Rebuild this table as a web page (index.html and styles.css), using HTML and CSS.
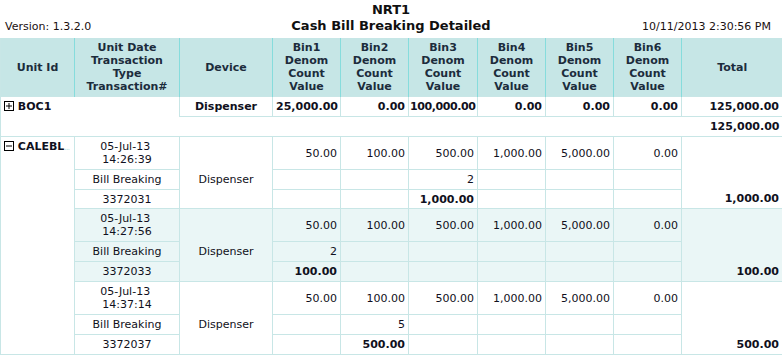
FILE: index.html
```html
<!DOCTYPE html>
<html>
<head>
<meta charset="utf-8">
<link rel="stylesheet" href="styles.css">
</head>
<body>
<div class="top">
  <div class="version">Version: 1.3.2.0</div>
  <div class="title">NRT1<br>Cash Bill Breaking Detailed</div>
  <div class="stamp">10/11/2013 2:30:56 PM</div>
</div>
<table class="grid">
  <colgroup>
    <col class="c-unit"><col class="c-date"><col class="c-dev">
    <col class="c-bin"><col class="c-bin"><col class="c-bin3"><col class="c-bin"><col class="c-bin"><col class="c-bin">
    <col class="c-total">
  </colgroup>
  <thead>
    <tr>
      <th>Unit Id</th>
      <th>Unit Date<br>Transaction<br>Type<br>Transaction#</th>
      <th>Device</th>
      <th>Bin1<br>Denom<br>Count<br>Value</th>
      <th>Bin2<br>Denom<br>Count<br>Value</th>
      <th>Bin3<br>Denom<br>Count<br>Value</th>
      <th>Bin4<br>Denom<br>Count<br>Value</th>
      <th>Bin5<br>Denom<br>Count<br>Value</th>
      <th>Bin6<br>Denom<br>Count<br>Value</th>
      <th>Total</th>
    </tr>
  </thead>
  <tbody>
    <tr class="r20">
      <td class="unit boc" colspan="2" rowspan="2"><svg class="tog" width="10" height="10" viewBox="0 0 10 10"><rect x="0.5" y="0.5" width="9" height="9" fill="#fff" stroke="#000"/><path d="M2 5h6M5 2v6" stroke="#000"/></svg> BOC1</td>
      <td class="ctr strong">Dispenser</td>
      <td class="num strong">25,000.00</td>
      <td class="num strong">0.00</td>
      <td class="num strong tight">100,000.00</td>
      <td class="num strong">0.00</td>
      <td class="num strong">0.00</td>
      <td class="num strong">0.00</td>
      <td class="num strong">125,000.00</td>
    </tr>
    <tr class="r20">
      <td class="blank" colspan="7"></td>
      <td class="blank num strong">125,000.00</td>
    </tr>

    <tr class="r33">
      <td class="unit grp" rowspan="9"><svg class="tog" width="10" height="10" viewBox="0 0 10 10"><rect x="0.5" y="0.5" width="9" height="9" fill="#fff" stroke="#000"/><path d="M2 5h6" stroke="#000"/></svg> CALEBL<span class="dots">...</span></td>
      <td class="ctr">05-Jul-13&nbsp;<br>14:26:39</td>
      <td class="ctr dev" rowspan="3">Dispenser</td>
      <td class="num">50.00</td><td class="num">100.00</td><td class="num">500.00</td><td class="num">1,000.00</td><td class="num">5,000.00</td><td class="num">0.00</td>
      <td class="num tot" rowspan="3">1,000.00</td>
    </tr>
    <tr class="r20">
      <td class="ctr">Bill Breaking</td>
      <td class="num"></td><td class="num"></td><td class="num">2</td><td class="num"></td><td class="num"></td><td class="num"></td>
    </tr>
    <tr class="r19">
      <td class="ctr">3372031</td>
      <td class="num"></td><td class="num"></td><td class="num strong">1,000.00</td><td class="num"></td><td class="num"></td><td class="num"></td>
    </tr>

    <tr class="r33 alt">
      <td class="ctr">05-Jul-13&nbsp;<br>14:27:56</td>
      <td class="ctr dev" rowspan="3">Dispenser</td>
      <td class="num">50.00</td><td class="num">100.00</td><td class="num">500.00</td><td class="num">1,000.00</td><td class="num">5,000.00</td><td class="num">0.00</td>
      <td class="num tot" rowspan="3">100.00</td>
    </tr>
    <tr class="r20 alt">
      <td class="ctr">Bill Breaking</td>
      <td class="num">2</td><td class="num"></td><td class="num"></td><td class="num"></td><td class="num"></td><td class="num"></td>
    </tr>
    <tr class="r20 alt">
      <td class="ctr">3372033</td>
      <td class="num strong">100.00</td><td class="num"></td><td class="num"></td><td class="num"></td><td class="num"></td><td class="num"></td>
    </tr>

    <tr class="r33">
      <td class="ctr">05-Jul-13&nbsp;<br>14:37:14</td>
      <td class="ctr dev" rowspan="3">Dispenser</td>
      <td class="num">50.00</td><td class="num">100.00</td><td class="num">500.00</td><td class="num">1,000.00</td><td class="num">5,000.00</td><td class="num">0.00</td>
      <td class="num tot" rowspan="3">500.00</td>
    </tr>
    <tr class="r20">
      <td class="ctr">Bill Breaking</td>
      <td class="num"></td><td class="num">5</td><td class="num"></td><td class="num"></td><td class="num"></td><td class="num"></td>
    </tr>
    <tr class="r20">
      <td class="ctr">3372037</td>
      <td class="num"></td><td class="num strong">500.00</td><td class="num"></td><td class="num"></td><td class="num"></td><td class="num"></td>
    </tr>
  </tbody>
</table>
</body>
</html>
```
FILE: styles.css
```css
html, body {
  margin: 0;
  padding: 0;
  background: #fff;
}
body {
  font-family: "DejaVu Sans", Verdana, sans-serif;
  font-size: 11px;
  color: #000;
  width: 782px;
  overflow: hidden;
}
.top {
  position: relative;
  display: flex;
  align-items: flex-end;
  justify-content: space-between;
  height: 38px;
  box-sizing: border-box;
  padding: 0 11px 5px 5px;
}
.version, .stamp {
  line-height: 13px;
  color: #1a1010;
}
.title {
  position: absolute;
  left: 0;
  right: 0;
  top: 2px;
  text-align: center;
  font-weight: bold;
  font-size: 13px;
  line-height: 16px;
  color: #101010;
}
.grid {
  width: 782px;
  table-layout: fixed;
  border-collapse: collapse;
  border-left: 1px solid #c8e6e6;
}
.c-unit { width: 74px; }
.c-date { width: 105px; }
.c-dev { width: 93px; }
.c-bin { width: 68px; }
.c-bin3 { width: 69px; }
.c-total { width: 101px; }

th {
  background: #c6e6e6;
  color: #1c2c3c;
  font-weight: bold;
  line-height: 13px;
  padding: 3px 2px 3px;
  height: 52px;
  border-left: 1px solid #86dcdc;
  border-right: 1px solid #86dcdc;
  text-align: center;
  vertical-align: middle;
}
th:first-child { border-left: none; }
th:last-child { border-right: none; }

td {
  border: 1px solid #c8e6e6;
  padding: 0 3px 0 3px;
  line-height: 13px;
  color: #101020;
  white-space: nowrap;
  overflow: hidden;
}
.r20 { height: 20px; }
.r19 { height: 19px; }
.r33 { height: 33px; }
.alt td { background: #eaf6f6; }
.alt td.grp { background: #fff; }

.unit {
  vertical-align: top;
  font-weight: bold;
  padding: 3px 2px;
  text-align: left;
}
.unit.boc {
  border-right: none;
  border-bottom: 1px solid #c8e6e6;
}
.tog {
  vertical-align: -1px;
  margin-left: 1px;
}
.dots {
  color: #b8e2e2;
  font-weight: normal;
  font-size: 8px;
  letter-spacing: -1px;
}
.strong { font-weight: bold; }
.tight { letter-spacing: -0.4px; padding-left: 1px; padding-right: 2px; }
.num { text-align: right; vertical-align: middle; }
.ctr { text-align: center; vertical-align: middle; }
.dev { padding-top: 13px; }
.tot {
  vertical-align: bottom;
  font-weight: bold;
  padding-bottom: 3px;
}
.blank {
  border-left: none;
  border-right: none;
  border-top: 1px solid #c8e6e6;
}
```
